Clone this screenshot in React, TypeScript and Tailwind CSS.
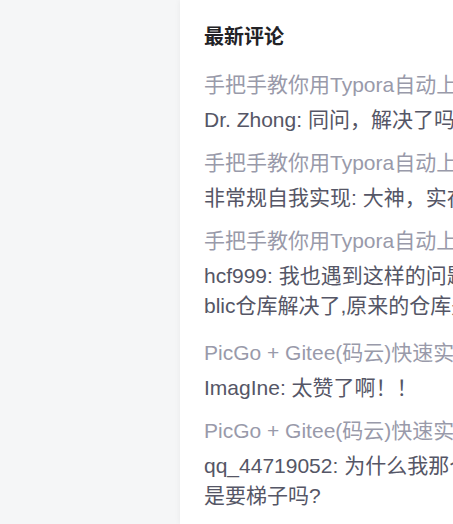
import React from "react"

interface Comment {
  article: string
  user: string
  text: string
}

const comments: Comment[] = [
  { article: "手把手教你用Typora自动上传到picgo图床", user: "Dr. Zhong", text: "同问，解决了吗" },
  { article: "手把手教你用Typora自动上传到picgo图床", user: "非常规自我实现", text: "大神，实在厉害" },
  { article: "手把手教你用Typora自动上传到picgo图床", user: "hcf999", text: "我也遇到这样的问题,换成public仓库解决了,原来的仓库是私有的" },
  { article: "PicGo + Gitee(码云)快速实现图床", user: "ImagIne", text: "太赞了啊！！" },
  { article: "PicGo + Gitee(码云)快速实现图床", user: "qq_44719052", text: "为什么我那个上不去是要梯子吗?" },
]

const App = () => {
  return (
    <div className="flex h-[524px] w-[453px] overflow-hidden bg-[#f5f6f7] font-['Liberation_Sans','Noto_Sans_CJK_SC',sans-serif]">
      <div className="w-[180px] shrink-0" />

      <div className="w-[388px] shrink-0 bg-white pl-6 pr-6 pt-[23px] shadow-[0_0_6px_rgba(0,0,0,0.06)]">
        <h3 className="mb-[19px] text-[20px] leading-[28px] font-bold text-[#222226]">最新评论</h3>

        <ul className="flex flex-col">
          {comments.map((c, i) => (
            <li key={i} className={c.user === "hcf999" ? "mb-[17px]" : "mb-[13px]"}>
              <p className="whitespace-nowrap overflow-hidden text-[21px] leading-[30px] text-[#999aaa]">{c.article}</p>
              <p className="mt-[5px] w-[340px] break-all text-[21px] leading-[30px] text-[#555666]">
                {c.user}: {c.text}
              </p>
            </li>
          ))}
        </ul>
      </div>
    </div>
  )
}

export default App
